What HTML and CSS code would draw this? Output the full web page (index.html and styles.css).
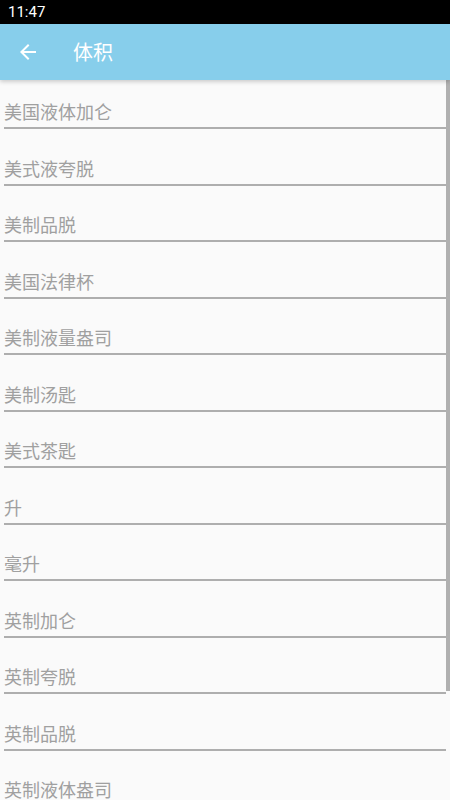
FILE: index.html
```html
<!DOCTYPE html>
<html lang="zh">
<head>
<meta charset="utf-8">
<title>体积</title>
<link rel="stylesheet" href="styles.css">
</head>
<body>
<div class="status-bar"><span class="time">11:47</span></div>
<header class="app-bar">
  <svg class="back" width="24" height="24" viewBox="0 0 24 24"><path d="M20 11H7.83l5.59-5.59L12 4l-8 8 8 8 1.41-1.41L7.83 13H20v-2z" fill="#fff"/></svg>
  <h1 class="title">体积</h1>
</header>
<main class="list-wrap">
  <ul class="list">
    <li class="row"><span class="label">美国液体加仑</span><span class="rule"></span></li>
    <li class="row"><span class="label">美式液夸脱</span><span class="rule"></span></li>
    <li class="row"><span class="label">美制品脱</span><span class="rule"></span></li>
    <li class="row"><span class="label">美国法律杯</span><span class="rule"></span></li>
    <li class="row"><span class="label">美制液量盎司</span><span class="rule"></span></li>
    <li class="row"><span class="label">美制汤匙</span><span class="rule"></span></li>
    <li class="row"><span class="label">美式茶匙</span><span class="rule"></span></li>
    <li class="row"><span class="label">升</span><span class="rule"></span></li>
    <li class="row"><span class="label">毫升</span><span class="rule"></span></li>
    <li class="row"><span class="label">英制加仑</span><span class="rule"></span></li>
    <li class="row"><span class="label">英制夸脱</span><span class="rule"></span></li>
    <li class="row"><span class="label">英制品脱</span><span class="rule"></span></li>
    <li class="row"><span class="label">英制液体盎司</span><span class="rule"></span></li>
  </ul>
  <div class="scroll-thumb"></div>
</main>
</body>
</html>
```
FILE: styles.css
```css
html, body {
  margin: 0;
  padding: 0;
  height: 800px;
  overflow: hidden;
}
body {
  background: #fafafa;
  font-family: Roboto, "Noto Sans CJK SC", sans-serif;
}
.status-bar {
  height: 24px;
  background: #000;
  display: flex;
  align-items: center;
  padding-left: 8px;
}
.time {
  color: #fff;
  font-size: 15px;
  font-family: Roboto, sans-serif;
}
.app-bar {
  height: 56px;
  background: #87ceeb;
  display: flex;
  align-items: center;
  padding-left: 16px;
  box-shadow: 0 2px 4px rgba(0,0,0,0.18);
  position: relative;
  z-index: 2;
}
.back {
  width: 24px;
  height: 24px;
}
.title {
  margin: 0 0 0 33px;
  font-size: 20px;
  font-weight: normal;
  color: #fff;
  font-family: "Noto Sans CJK SC", sans-serif;
  line-height: 24px;
}
.list-wrap {
  position: relative;
  width: 450px;
}
.list {
  list-style: none;
  margin: 0;
  padding: 0;
  width: 446px;
}
.row {
  height: 56.5px;
  display: flex;
  flex-direction: column;
  padding-left: 4px;
  box-sizing: border-box;
}
.label {
  margin-top: 20px;
  height: 22px;
  line-height: 22px;
  font-size: 18px;
  color: #a0a0a0;
  font-family: "Noto Sans CJK SC", sans-serif;
}
.rule {
  margin-top: 5px;
  height: 2px;
  background: #aeaeae;
}
.scroll-thumb {
  position: absolute;
  right: 0;
  top: 0;
  width: 4px;
  height: 611px;
  background: #b0b0b0;
}
```
